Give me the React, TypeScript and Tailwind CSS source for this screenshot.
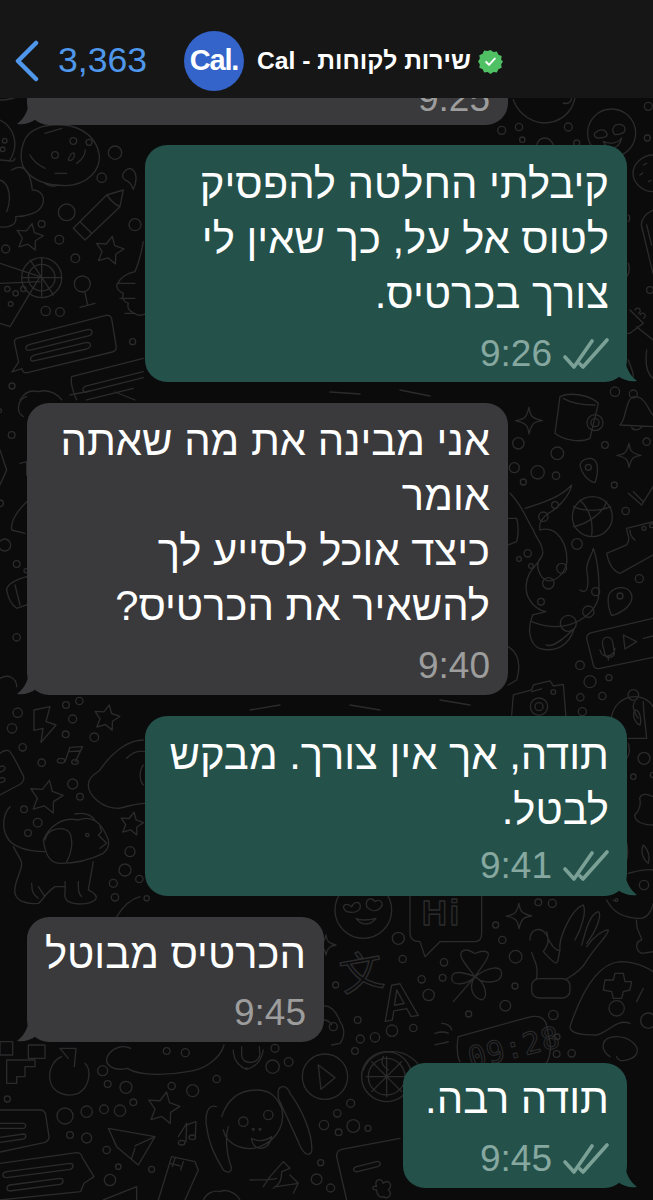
import React from 'react';

const FONT = "font-['Liberation_Sans','DejaVu_Sans',sans-serif]";

const Ticks: React.FC = () => (
  <svg width="46" height="32" viewBox="0 0 46 32" fill="none" stroke="#7ba096" strokeWidth="3.6" strokeLinecap="round" strokeLinejoin="round">
    <path d="M2 19l9 10L29 3" />
    <path d="M17 26l3 3L44 2" />
  </svg>
);

const Tail: React.FC<{ mine: boolean; color: string }> = ({ mine, color }) =>
  mine ? (
    <svg className="absolute right-[-10px] bottom-0" width="22" height="26" viewBox="0 0 22 26">
      <path d="M0 0h10c0 10 4 19 12 25-7 1-14-1-19-5-2 1-3 2-3 2z" fill={color} />
    </svg>
  ) : (
    <svg className="absolute left-[-10px] bottom-0" width="22" height="26" viewBox="0 0 22 26">
      <path d="M22 0H12C12 10 8 19 0 25c7 1 14-1 19-5 2 1 3 2 3 2z" fill={color} />
    </svg>
  );

type BubbleProps = { mine?: boolean; lines: string[]; time: string; width: string; spacing: string };

const Bubble: React.FC<BubbleProps> = ({ mine = false, lines, time, width, spacing }) => (
  <div
    className={`relative shrink-0 rounded-[22px] pl-[20px] pr-[18px] ${spacing} ${width} ${mine ? 'self-end mr-[26px] bg-[#24514a]' : 'self-start ml-[27px] bg-[#3a3a3c]'}`}
  >
    <Tail mine={mine} color={mine ? '#24514a' : '#3a3a3c'} />
    <div dir="rtl" className="text-[41.8px] leading-[55px] text-white">
      {lines.map((l) => (
        <div key={l} className="whitespace-nowrap">{l}</div>
      ))}
    </div>
    <div className="flex items-center justify-end gap-[11px]">
      <span className={`text-[37px] leading-[40px] ${mine ? 'text-[#86a8a0]' : 'text-[#9d9d9d]'}`}>{time}</span>
      {mine && <Ticks />}
    </div>
  </div>
);

const star = (cx: number, cy: number, r: number) => {
  const pts: string[] = [];
  for (let i = 0; i < 10; i++) {
    const rad = i % 2 === 0 ? r : r * 0.5;
    const a = -Math.PI / 2 + 0.2 + (i * Math.PI) / 5;
    pts.push(`${(cx + rad * Math.cos(a)).toFixed(1)},${(cy + rad * Math.sin(a)).toFixed(1)}`);
  }
  return <polygon key={`${cx}-${cy}`} points={pts.join(' ')} strokeLinejoin="round" />;
};

const dots = (list: number[][]) => list.map(([cx, cy, r]) => <circle key={`${cx}-${cy}-${r}`} cx={cx} cy={cy} r={r} />);

// the doodles are noted in coords of a 3x crop, hence the scale on each group
const Area: React.FC<{ x: number; y: number; children: React.ReactNode }> = ({ x, y, children }) => (
  <g transform={`translate(${x} ${y}) scale(0.3333)`} strokeWidth="4">{children}</g>
);

const sparkle = (x: number, y: number, r: number) => (
  <path key={`s${x}`} d={`M${x} ${y - r}c3 ${r * 0.6} 6 ${r * 0.8} ${r} ${r}c-${r * 0.6} 3-${r * 0.8} 6-${r} ${r}c-3-${r * 0.6}-6-${r * 0.8}-${r}-${r}c${r * 0.6}-3 ${r * 0.8}-6 ${r}-${r}z`} />
);

const Doodles: React.FC = () => (
  <svg className="absolute inset-0" width="653" height="1200" viewBox="0 0 653 1200" fill="none" stroke="#2b2b2c" strokeLinecap="round" strokeLinejoin="round">
    <Area x={0} y={100}>
      {dots([[345, 158, 20], [305, 233, 14], [200, 337, 25], [125, 372, 10], [178, 419, 13], [17, 447, 12], [226, 475, 13], [405, 374, 18], [398, 725, 9], [36, 858, 9], [137, 633, 14], [180, 636, 13], [247, 552, 24], [125, 533, 60], [125, 533, 40], [22, 567, 8], [47, 580, 8], [70, 567, 8], [32, 612, 7], [220, 123, 10], [267, 127, 9], [165, 165, 10], [14, 122, 7], [8, 148, 7]])}
      {star(88, 412, 42)}
      {star(328, 452, 44)}
      <path d="M70 130c10-40 60-60 120-55 60 5 100 40 108 90 4 50-40 90-100 92-70 0-110-20-130-60-8-25-6-45 2-67z" />
      <path d="M135 100l50-15M90 165c10 20 25 30 45 40M205 180c4-15 12-25 18-20 2 15-8 25-18 20M230 190c15-10 25-25 26-40M165 220h35M135 250c15 10 30 10 40 5" />
      <path d="M0 0c50 0 80-20 78-50M0 60c40 20 60 70 30 120M0 180c30 0 40 10 45-5" />
      <path d="M35 210c30-20 55-5 62 60 25 0 40 20 30 45-10 25-50 35-80 35 5 25-20 35-50 30M0 240c30 10 35 60 20 95" />
      <path d="M370 270l-10 50-105 100-35-35 100-100zM320 285c15 20 25 30 40 35M240 365l35 35" />
      <path d="M390 205c-20 5-30 25-15 35 15 5 22 20 25 28 10-20 15-55-10-63zM430 425c-5 30-10 55-25 90-25 5-45 20-55 40 0 15 10 20 20 25-5 15 0 25 15 30-5 15 5 25 15 28 15 15 40 5 45-5" />
      <path d="M355 550h50M360 595h45M375 640h30" />
      <path d="M0 490l120 40-90 150-30-10M0 550l120-5M90 480l70 105M65 533h120M125 473v120" />
      <path d="M255 578l8 38M240 622l45-12" />
      <path d="M50 715l265-68c10-3 18 0 20 10l14 85c0 8-3 12-12 14l-255 62c-10 2-15-3-16-12l-30 10 20-30-12-55c-2-8 0-13 6-16z" />
      <path d="M90 733l175-45c15 0 15 15 0 20l-170 42c-20 5-25-10-5-17zM105 765l155-38c15 0 15 15 0 20l-155 35c-15 5-20-10 0-17z" />
      <path d="M215 830l215-55M215 830c-5 15 5 50 15 70M430 815l-170 43c-15 5-15 20 0 18l170-43M260 900l140-35" />
      <path d="M60 900c15-25 35-30 55-25 30-10 60 10 70 25" />
    </Area>
    <Area x={505} y={380}>
      {dots([[40, 190, 17], [157, 220, 19], [28, 263, 15], [98, 277, 20], [153, 287, 11], [55, 306, 9], [300, 195, 10], [425, 185, 11], [328, 315, 9], [362, 393, 11], [216, 492, 16], [403, 596, 12], [68, 520, 11], [42, 537, 7], [78, 558, 7], [225, 856, 13], [255, 905, 18], [312, 893, 9], [226, 952, 11], [292, 948, 11], [232, 995, 12], [330, 35, 14], [270, 128, 24], [270, 128, 12], [250, 262, 9], [345, 648, 9], [385, 42, 12], [262, 410, 60], [102, 980, 26], [102, 980, 12], [145, 936, 7]])}
      {sparkle(72, 122, 40)}
      {sparkle(372, 226, 36)}
      <path d="M165 50c30-15 90-5 115 20l-25 105c-30 15-80 5-105-15zM175 55c25 15 65 20 95 20" />
      <path d="M345 135c20-15 15-85 45-85 30 0 40 40 54 55M345 135l99 5M380 142c5 10 20 10 30 0" />
      <path d="M225 255c5-20 40-30 50-5 5 20 0 45-5 58-20-5-40-25-45-53zM310 650c5-30 60-40 70-5 5 25-20 50-60 62-10-20-12-35-10-57z" />
      <path d="M205 380c30 15 80 15 112 0M205 440c35-5 90-40 100-75M225 360c30 30 40 70 35 108" />
      <path d="M370 340l40 35 34-55M385 335l30 30" />
      <path d="M365 445l80-20M365 445c0 20 15 25 0 50l-60 25c5 30 20 55 40 60l99-55M375 450c0 20 10 25 15 30" />
      <circle cx="417" cy="445" r="6" />
      <circle cx="440" cy="437" r="6" />
      <path d="M15 340c40 40 55 90 70 110 10 30 30 40 28 70-5 30-50 50-50 100 0 40 30 70 60 75l-40 10c-20 50-5 90 20 100 50 15 90-10 105-60-20 20-60 60-85 50M60 385c50-15 110-35 140-70-5 30-40 70-70 85-20 15-30 30-25 50 50-15 85 40 80 100-10 40-50 70-75 40-20-30-10-50 0-60M225 630c20 15 30-10 20-60 0-30 15-40 20-65 15 40 20 110 15 150-10 40-60 85-130 85-30 0-55-10-70-15" />
      <circle cx="115" cy="410" r="14" />
      <circle cx="150" cy="375" r="10" />
      <circle cx="170" cy="565" r="15" />
      <circle cx="130" cy="610" r="17" />
      <circle cx="108" cy="665" r="10" />
      <circle cx="190" cy="730" r="24" />
      <circle cx="250" cy="695" r="17" />
      <circle cx="272" cy="635" r="12" />
      <path d="M10 415h25c5 20 5 50 0 70l-25 10M10 800c30 20 40 50 25 100l-25 15" />
      <path d="M245 775c0-10 5-15 15-17l184-43M245 775l20 80c3 10 10 13 20 10l159-33" />
      <path d="M292 790c0-25 30-25 32 0l4 28c0 15-25 20-28 5zM285 810c5 25 40 25 45-5M310 840v-10" />
      <path d="M355 765l40 20-35 22zM415 775l29-7" />
      <path d="M25 945l55-15 5-15 50-12 10 15 30-5 8 100M25 945l-5 60" />
      <path d="M80 935l30-8" />
      <path d="M320 1010c5-30 30-60 70-60 30 0 50 20 54 30M390 965c-10 10-5 30 10 50" />
      <circle cx="385" cy="945" r="16" />
    </Area>
    <Area x={0} y={690}>
      {dots([[198, 45, 10], [238, 33, 11], [53, 68, 14], [218, 87, 12], [36, 115, 14], [197, 133, 10], [283, 142, 13], [68, 172, 11], [125, 218, 11], [218, 282, 15], [240, 320, 10], [72, 358, 10], [113, 398, 13], [84, 429, 10], [390, 485, 15], [375, 540, 18], [418, 567, 11], [340, 580, 12], [345, 622, 11]])}
      {star(320, 84, 40)}
      {star(138, 322, 52)}
      {star(395, 402, 36)}
      <path d="M102 60l48-10-12 45 30 10-45 52 6-42-27 6z" />
      <path d="M195 215l15-43 38-2-22 45M205 185l35-2" />
      <ellipse cx="183" cy="212" rx="11" ry="7" />
      <ellipse cx="225" cy="216" rx="10" ry="7" />
      <path d="M0 190c8-8 20-10 26-8 10 4 30 50 44 75 5 15-2 22-14 28l-56 30M0 230c10-5 15 0 15 5 0 5-10 10-15 12M0 265c10-5 15 0 15 5 0 5-10 8-15 8" />
      <path d="M430 150c-40 0-90 30-130 90-10 10-35 20-35 45 0 30 40 70 90 70 30-5 50-15 80-15M380 205c15-15 35-25 55-20M430 225c-15 20-10 50 0 60" />
      <path d="M30 350c-20 20-25 60-10 90 15 30 60 45 115 45" />
      <path d="M130 450c20-45 60-70 105-60 40-15 70 5 90 60 5 20-5 30-15 40-40 20-90 30-130 30-35 0-45-35-50-70zM135 450c5-35 60-45 75-20 10 25 5 60-10 85M225 372c20-5 50 0 60 20M300 410l5 15-10 10 25 25-20 15" />
      <circle cx="262" cy="435" r="5" />
      <path d="M40 470c10 20 25 40 25 50 0 30-25 55-20 90 5 20 30 35 70 30 10-5 20-30 50-50h30M95 580c0 25 5 35 20 45M115 590l20 30M195 575c5 30-10 45 10 60 20 10 60 10 80-5 10-10 0-20-20-30l15-85M235 575c0 25 0 35 10 45" />
      <path d="M350 680c25-40 50-55 70-60" />
      <circle cx="440" cy="625" r="8" />
    </Area>
    <Area x={320} y={890}>
      {dots([[130, 60, 85], [235, 145, 18], [248, 207, 11], [372, 217, 11], [47, 285, 9], [305, 268, 11], [368, 263, 10], [326, 315, 17], [587, 200, 19], [527, 105, 9], [547, 150, 11], [655, 37, 10], [697, 40, 12], [585, 288, 9], [556, 347, 16], [446, 372, 9], [700, 375, 14], [712, 440, 8], [710, 492, 10], [755, 490, 11], [113, 390, 10], [121, 447, 12], [165, 442, 14], [216, 422, 17], [280, 414, 11], [105, 483, 10], [890, 355, 23], [985, 392, 23]])}
      {sparkle(597, 78, 38)}
      {sparkle(18, 165, 30)}
      <path d="M80 65c-20-15-5-30 15-15 10-20 30-15 25 5-5 10-20 15-40 10zM140 50c-5-25 15-30 25-15 15-10 30 5 15 20-10 10-25 10-40-5zM108 85c15 20 40 25 60 0-20 5-45 8-60 0z" />
      <path d="M270 20v110c0 15 10 25 30 25l15 45 45-45h105c15 0 20-10 20-25V20" />
      <text x="305" y="105" fontFamily="Liberation Sans, sans-serif" fontSize="105" fontWeight="bold" letterSpacing="8">Hi</text>
      <text x="60" y="295" fontFamily="Noto Sans CJK SC, sans-serif" fontSize="130" transform="rotate(-10 120 250)">文</text>
      <text x="180" y="385" fontFamily="Liberation Sans, sans-serif" fontSize="150" fontWeight="bold" transform="rotate(-10 240 320)">A</text>
      <path d="M465 260c-30-40-50-60-40-75 15-15 35 5 40 5 5 0 30-15 40 0 5 15-25 45-40 70zM465 260c-40-15-70-20-70 5 0 25 45 20 70-5zM465 260c40-30 80-35 80-10 0 30-50 35-80 10zM465 260c-20 30-10 60 20 70 20-5 15-50-20-70zM465 260l-65 75" />
      <path d="M365 400c15 0 30 10 30 20M345 430c15-5 30-5 40 0M345 465c15-5 30-5 40-10" />
      <path d="M630 150c0-30 30-45 50-15 10 30 30 50 40 45-10 40 0 60-50 5 10-15 20-25 10-60M650 268c5-45-5-50-15-80M720 180c-5-30 30-120 70-135 10 20-5 70-25 105M785 165c10-30 20-90 50-100 10 5 0 50-35 95M800 170c20-30 50-50 65-50 5 10-40 50-70 100-15 25-45 40-60 50" />
      <rect x="635" y="266" width="115" height="58" rx="22" />
      <path d="M750 410c40-120 90-190 150-195 60 0 99 30 99 30M750 410c0 20 30 25 80 25M830 435c40-10 60-50 100-35M870 500c-30-20-30-60 20-60 40 0 70 30 60 50-5 15-50 35-60 10" />
      <path d="M855 270h25l5-20h25l5 25h20l-5 25-20 5-5 20h-25l-5-20-25-5zM950 335l20-40" />
      <path d="M415 440l210-58c30-8 50 0 55 25l10 50c5 25-5 55-10 60M415 440c-5 20-5 60 5 75" />
      <text x="440" y="510" fontFamily="DejaVu Sans Mono, monospace" fontSize="90" letterSpacing="2" strokeWidth="3" transform="rotate(-14 555 470)">09:28</text>
      <path d="M130 540c15-40 50-55 90-55 40 0 75 30 85 55M190 500c-10 20 0 30 15 40" />
      <path d="M0 350c30-10 50 15 60 45 15 20 15 45 0 65l-25 5M10 390c15 0 20 5 25 15" />
      <circle cx="40" cy="410" r="12" />
      <path d="M860 30c20 40 60 55 100 55 20 0 35-20 40-45M950 90c-5 30 15 45 15 60-20 5-20 30 0 40l35-5M880 30l10 5" />
      <circle cx="890" cy="30" r="4" />
    </Area>
    <Area x={0} y={900}>
      {dots([[22, 597, 9], [308, 512, 15], [323, 552, 10], [378, 562, 18], [515, 558, 11], [578, 572, 18], [650, 537, 11], [195, 648, 24], [260, 635, 17], [312, 628, 13], [360, 632, 17], [400, 607, 10], [210, 705, 10], [260, 714, 15], [320, 750, 11], [355, 800, 8], [455, 808, 9], [330, 840, 17], [500, 453, 10], [556, 458, 12], [818, 500, 20], [866, 486, 13], [825, 445, 12], [972, 675, 14], [1016, 697, 10], [1060, 678, 19], [1104, 685, 9], [1012, 640, 11], [1052, 610, 12], [962, 788, 9], [950, 838, 16], [992, 864, 12], [975, 530, 68], [1160, 530, 75], [1160, 530, 55], [730, 665, 14], [805, 645, 14]])}
      {star(490, 625, 50)}
      <path d="M322 470c15-30 50-35 70-25M322 470c-10 25 20 45 60 35 40 25 130 20 180 10 50-5 100-40 110-80" />
      <path d="M955 495l50 38-42 35z" />
      <path d="M1160 470v120M1100 530h120M1115 485l90 90M1205 485l-90 90" />
      <path d="M725 440v25c0 30 50 30 55 0l-2-25M700 450c0 40 30 55 40 58M790 450c-5 30-20 50-50 58M740 508v-5" />
      <path d="M205 475l-25-30 48 0-5 55M255 490c20 20 15 70-20 90-40 15-80-5-85-40-5-30 10-60 35-70" />
      <path d="M20 480h85M20 480v70h30v-20h25v-30h30v-20M85 435h50v40H85zM0 425h38v40H0z" />
      <path d="M560 670l-25 40M588 665l-28 10-2 50M588 665l-2 45" />
      <ellipse cx="545" cy="728" rx="10" ry="7" />
      <ellipse cx="577" cy="712" rx="10" ry="7" />
      <path d="M325 685l140 25-50 85-65-55zM405 738l60-28M405 745l-10 30" />
      <path d="M650 620c-30-10-35 30-30 60 5 50 25 90 50 130 20 15 30 0 20-20-10-30-15-80-5-110M850 560c-20 0-15 20-15 35l60 130c10 30 30 50 40 30 5-50-30-130-65-175-5-15-15-20-20-20M665 650c20-60 60-80 105-80 40 0 60 20 75 55 10 40-5 90-65 115-40 15-100 0-110-50M755 715c20 10 40 10 60-5-5 25-20 35-35 35-15 0-25-15-25-30z" />
      <circle cx="760" cy="688" r="3" />
      <circle cx="780" cy="688" r="3" />
      <path d="M750 840c30 0 60 0 80-5M790 860l20-30 40-45 20 20-25 10c0 30-10 40-25 50M830 860l65-10-25-25M895 850l-15 30" />
      <path d="M0 630h120c10 0 15 5 17 15l10 65c0 10-5 15-15 18l-132 28M0 670h70c10 0 8 15 0 15H0M0 712l70-10c10 0 10 12 0 15l-70 10" />
      <path d="M0 790l230-32c10 0 15 5 17 15l35 57-30 20-10 25L0 900M20 815l190-25c12 0 12 15 0 18l-190 25c-15 0-15-15 0-18zM30 855l150-20c12 0 12 15 0 18l-150 20c-12 0-12-15 0-18z" />
      <path d="M475 900l40-130 70 15 10 25-40 90M510 790l30 8M525 775l-8 25M550 785l-8 25" />
      <path d="M310 900l100-40v40M610 900c10-20 30-30 50-25 20-10 50 5 60 25" />
      <path d="M1010 770c0-10 5-20 15-22l175-33M1010 770l30 130M1070 800l60-15c12-3 15 10 3 15l-60 15c-15 3-15-12-3-15z" />
      <path d="M1130 860c-10-20 15-30 20-10 15-15 30 5 15 20 15 10 0 30-15 20-10 5-20-5-20-20-15 0-15-15 0-10z" />
    </Area>
    {/* top right, above the first green bubble */}
    <Area x={500} y={98}>
      {dots([[335, 105, 72], [57, 87, 11], [205, 87, 12], [67, 125, 8], [5, 97, 12], [230, 135, 9], [442, 120, 9], [445, 25, 12]])}
      <path d="M40 5c10 30 40 65 90 70 50 0 85-30 95-75M190 15c15 5 25-5 25-15" />
      <path d="M285 105c15-15 30-10 35 0 5 10-5 15-25 15-10 0-15-10-10-15zM340 90c5-15 35-15 35 5 0 10-15 15-30 15-5-5-10-15-5-20zM310 130c20 10 45 5 55-10-5 20-15 30-30 30-15 0-20-10-25-20z" />
      <path d="M110 140c5-15 15-20 25-20s20 10 25 20" />
    </Area>
    {/* right edge next to the first green bubble */}
    <Area x={620} y={150}>
      <path d="M99 15c-30 0-60 25-60 55 0 30 30 55 60 55M70 45l10-5M60 75l8-6M85 95l8-4" />
      <path d="M99 180c-20 10-35 25-35 45l30 125c3 12 5 20 5 20M80 225l15 60M25 195c5 5 8 10 0 20M25 340c5 15 5 25-3 38" />
      <circle cx="90" cy="420" r="10" />
      <path d="M30 480l40 40M70 520l-40 30M30 550h-10M45 480a8 8 0 1 1 10 10M60 495a8 8 0 1 1 10 10M50 530l49 40M80 600c-5 40 0 70 19 85M25 630c5 20 15 30 15 50" />
    </Area>
    {/* left edge next to the big grey bubble */}
    <Area x={0} y={395}>
      {dots([[35, 120, 10], [14, 450, 18], [50, 507, 10], [50, 727, 11], [0, 47, 5], [78, 527, 6], [0, 325, 10]])}
      <path d="M80 5c-25 5-35 45-10 60M0 165l20 60-20 45M80 320c-25 25-50 55-45 85l40 10M60 205l20-5 0 40M80 545c-20 5-60 20-60 40 5 30 15 45 30 55l30-10M45 570l15 60M0 850c25-15 50 0 50 25" />
    </Area>
    {/* right edge next to the second green bubble */}
    <Area x={620} y={700}>
      {dots([[72, 175, 18], [40, 230, 8], [99, 225, 8], [72, 555, 14]])}
      <path d="M45 30c15 0 20 30 15 45-15-5-25-30-15-45zM70 5c0 30 5 60 10 110H25M25 130c5 20 5 30-5 45M99 290c-20-10-35-10-40 5 5 20 0 35-15 50 0 20 25 30 55 30M20 430c5 20 5 30 0 50M70 435c-10 20 0 45 15 55 5-20 0-40-15-55zM25 520c20-5 50-15 74-10" />
    </Area>
    <path d="M70 395l20-4M115 392l20 8M330 392l30 2M400 390l30 6M250 710l30-5M350 705l30 5M440 700l30 5" strokeWidth="1.3" />
  </svg>
);

export default function App() {
  return (
    <div className={`relative h-[1200px] w-[653px] overflow-hidden bg-[#0b0b0c] ${FONT}`}>
      <Doodles />
      <div className="relative flex h-full flex-col">
        <header className="relative z-10 flex h-[98px] shrink-0 items-center bg-[#161616] pt-[24px]">
          <svg className="ml-[14px] shrink-0" width="26" height="42" viewBox="0 0 26 42" fill="none" stroke="#4f97ea" strokeWidth="4.5" strokeLinecap="round" strokeLinejoin="round">
            <path d="M22 3L4 21l18 18" />
          </svg>
          <span className="ml-[18px] w-[89px] text-[35.6px] leading-none text-[#4f97ea]">3,363</span>
          <div className="ml-[37px] flex h-[60px] w-[60px] shrink-0 items-center justify-center rounded-full bg-[#3463c9] text-[29px] font-bold tracking-[-1.2px] text-white">
            Cal.
          </div>
          <span dir="rtl" className="ml-[13px] text-[24.7px] font-bold leading-none text-white">שירות לקוחות - Cal</span>
          <svg className="ml-[7px] shrink-0" width="25" height="25" viewBox="0 0 26 26">
            <path d="M13 1l3 2.2 3.6-.6 1.6 3.3 3.4 1.5-.5 3.7L26 13l-1.9 2.9.5 3.7-3.4 1.5-1.6 3.3-3.6-.6L13 26l-3-2.2-3.6.6-1.6-3.3-3.4-1.5.5-3.7L0 13l1.9-2.9-.5-3.7 3.4-1.5 1.6-3.3 3.6.6z" fill="#4fc164" />
            <path d="M8.5 13.5l3 3 6-6.5" fill="none" stroke="#fff" strokeWidth="2" strokeLinecap="round" strokeLinejoin="round" />
          </svg>
        </header>

        <div className="flex flex-1 flex-col gap-[21px]">
          {/* previous message, cut off by the header */}
          <div className="relative -mb-[1px] ml-[27px] flex h-[27px] w-[481px] shrink-0 items-end justify-end rounded-b-[22px] bg-[#3a3a3c] pb-[6px] pr-[18px]">
            <Tail mine={false} color="#3a3a3c" />
            <span className="text-[37px] leading-[40px] text-[#9d9d9d]">9:25</span>
          </div>
          <Bubble mine width="w-[482px]" spacing="pt-[11px] pb-[8px] [&>div:last-child]:mt-[13px]" lines={['קיבלתי החלטה להפסיק', 'לטוס אל על, כך שאין לי', 'צורך בכרטיס.']} time="9:26" />
          <Bubble width="w-[481px]" spacing="pt-[10px] pb-[9px] [&>div:last-child]:mt-[13px]" lines={['אני מבינה את מה שאתה', 'אומר', 'כיצד אוכל לסייע לך', 'להשאיר את הכרטיס?']} time="9:40" />
          <Bubble mine width="w-[482px]" spacing="pt-[11px] pb-[10px] [&>div:last-child]:mt-[9px]" lines={['תודה, אך אין צורך. מבקש', 'לבטל.']} time="9:41" />
          <Bubble width="w-[297px]" spacing="pt-[9px] pb-[9px] [&>div:last-child]:mt-[12px]" lines={['הכרטיס מבוטל']} time="9:45" />
          <Bubble mine width="w-[224px]" spacing="pt-[8px] pb-[9px] [&>div:last-child]:mt-[13px]" lines={['תודה רבה.']} time="9:45" />
        </div>
      </div>
    </div>
  );
}
